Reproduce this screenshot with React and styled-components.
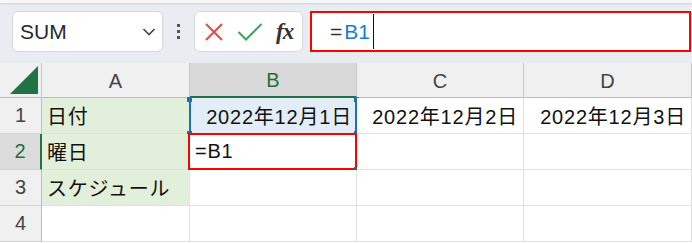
import React from "react";
import styled, { createGlobalStyle, css } from "styled-components";

const GlobalStyle = createGlobalStyle`
  body {
    margin: 0;
    background: #ffffff;
  }
`;

const FONT = `"Liberation Sans", "Noto Sans CJK JP", sans-serif`;

const Frame = styled.div`
  width: 692px;
  height: 243px;
  overflow: hidden;
  font-family: ${FONT};
  background: #ffffff;
`;

// TOOLBAR WITH NAME BOX AND FORMULA BAR
const Toolbar = styled.div`
  position: relative;
  height: 63px;
  box-sizing: border-box;
  background: #e9ecf0;
  padding: 11px 1px 0 12px;
  display: flex;
  align-items: flex-start;
`;

const TopStrip = styled.div`
  position: absolute;
  left: 0;
  right: 0;
  top: 0;
  height: 3px;
  background: #f7f8f9;
  box-shadow: 0 1px 2px rgba(0, 0, 0, 0.12);
`;

const NameBox = styled.div`
  width: 151px;
  height: 41px;
  box-sizing: border-box;
  background: #fff;
  border: 1px solid #d4d7db;
  border-radius: 6px;
  display: flex;
  align-items: center;
  justify-content: space-between;
  padding: 0 6px 0 7px;
  font-size: 21px;
  color: #262a30;
`;

const Dots = styled.div`
  width: 31px;
  height: 41px;
  display: flex;
  flex-direction: column;
  align-items: center;
  justify-content: center;
  gap: 3px;
  span {
    width: 3px;
    height: 3px;
    background: #555;
  }
`;

const FuncBox = styled.div`
  width: 109px;
  height: 41px;
  box-sizing: border-box;
  background: #fff;
  border: 1px solid #d4d7db;
  border-radius: 6px;
  display: flex;
  align-items: center;
  padding: 0 6px 0 9px;
  gap: 13px;
`;

const Fx = styled.span`
  font-family: "Liberation Serif", "DejaVu Serif", serif;
  font-style: italic;
  font-weight: bold;
  font-size: 23px;
  color: #333;
  letter-spacing: -1px;
`;

const FormulaInput = styled.div`
  margin-left: 7px;
  flex: 1;
  height: 41px;
  box-sizing: border-box;
  border: 2px solid #ff0000;
  background: #fff;
  display: flex;
  align-items: center;
  padding-left: 18px;
  font-size: 21px;
  color: #333;
`;

const Ref = styled.span`
  color: #1a7bd6;
  margin-left: 2px;
`;

const Caret = styled.span`
  display: inline-block;
  width: 1px;
  height: 35px;
  background: #111;
  margin-left: 3px;
`;

// SHEET GRID
const Sheet = styled.div`
  display: grid;
  grid-template-columns: 42px 148px 167px 167px 168px;
  grid-template-rows: 35px repeat(4, 36px);
`;

const Corner = styled.div`
  background: #f0f0f0;
  border-right: 1px solid #c9c9c9;
  border-bottom: 1px solid #bdbdbd;
  box-sizing: border-box;
  display: flex;
  align-items: flex-end;
  justify-content: flex-end;
  padding: 0 3px 3px 0;
`;

const ColHead = styled.div`
  box-sizing: border-box;
  background: ${(p) => (p.active ? "#d9d9d9" : "#f0f0f0")};
  border-right: 1px solid #c9c9c9;
  border-bottom: ${(p) => (p.active ? "2px solid #217346" : "1px solid #bdbdbd")};
  display: flex;
  align-items: center;
  justify-content: center;
  font-size: 20px;
  color: ${(p) => (p.active ? "#1f6f43" : "#444")};
  padding-top: 2px;
`;

const RowHead = styled.div`
  box-sizing: border-box;
  background: ${(p) => (p.active ? "#dcdcdc" : "#f0f0f0")};
  border-right: ${(p) => (p.active ? "2px solid #217346" : "1px solid #bdbdbd")};
  border-bottom: 1px solid #d6d6d6;
  display: flex;
  align-items: center;
  justify-content: center;
  font-size: 20px;
  color: ${(p) => (p.active ? "#1f6f43" : "#444")};
`;

const Cell = styled.div`
  position: relative;
  box-sizing: border-box;
  border-right: 1px solid #e1e1e1;
  border-bottom: 1px solid #e1e1e1;
  background: ${(p) => p.bg || "#fff"};
  display: flex;
  align-items: center;
  justify-content: ${(p) => (p.right ? "flex-end" : "flex-start")};
  padding: 0 5px 0 5px;
  font-size: 20px;
  letter-spacing: 0.8px;
  color: #111;
  white-space: nowrap;
  ${(p) =>
    p.refRange &&
    css`
      border-left: 2px solid #1a6fc2;
      border-right: 2px solid #1a6fc2;
      margin-left: -1px;
      padding-right: 3px;
    `}
`;

const Handle = styled.span`
  position: absolute;
  width: 5px;
  height: 5px;
  background: ${(p) => p.color};
  ${(p) => p.pos}
`;

const Selection = styled.div`
  position: absolute;
  left: -2px;
  top: -1px;
  right: -1px;
  bottom: -1px;
  border: 2px solid #ff0000;
  pointer-events: none;
`;

const XIcon = () => (
  <svg width="20" height="20" viewBox="0 0 20 20">
    <path d="M2 2 L18 18 M18 2 L2 18" stroke="#e8474a" strokeWidth="2" fill="none" />
  </svg>
);

const CheckIcon = () => (
  <svg width="26" height="20" viewBox="0 0 26 20">
    <path d="M1.5 10 L9 17.5 L24.5 2" stroke="#3da35a" strokeWidth="2" fill="none" />
  </svg>
);

const Chevron = () => (
  <svg width="14" height="10" viewBox="0 0 14 10">
    <path d="M1.5 2 L7 7.5 L12.5 2" stroke="#444" strokeWidth="1.6" fill="none" />
  </svg>
);

const CornerTriangle = () => (
  <svg width="28" height="28" viewBox="0 0 28 28">
    <polygon points="28,0 28,28 0,28" fill="#217346" />
  </svg>
);

const rows = [
  { n: 1, a: "日付", b: "2022年12月1日", c: "2022年12月2日", d: "2022年12月3日" },
  { n: 2, a: "曜日", b: "=B1", c: "", d: "" },
  { n: 3, a: "スケジュール", b: "", c: "", d: "" },
  { n: 4, a: "", b: "", c: "", d: "" },
];

const App = () => {
  return (
    <Frame>
      <GlobalStyle />
      <Toolbar>
        <TopStrip />
        <NameBox>
          <span>SUM</span>
          <Chevron />
        </NameBox>
        <Dots>
          <span />
          <span />
          <span />
        </Dots>
        <FuncBox>
          <XIcon />
          <CheckIcon />
          <Fx>fx</Fx>
        </FuncBox>
        <FormulaInput>
          <span>=</span>
          <Ref>B1</Ref>
          <Caret />
        </FormulaInput>
      </Toolbar>
      <Sheet>
        <Corner>
          <CornerTriangle />
        </Corner>
        <ColHead>A</ColHead>
        <ColHead active>B</ColHead>
        <ColHead>C</ColHead>
        <ColHead>D</ColHead>
        {rows.map((r) => (
          <React.Fragment key={r.n}>
            <RowHead active={r.n === 2}>{r.n}</RowHead>
            <Cell bg={r.n <= 3 ? "#e2efda" : "#fff"}>{r.a}</Cell>
            {r.n === 1 ? (
              <Cell right refRange bg="#e3edf7">
                {r.b}
                <Handle color="#1a6fc2" pos="left: -4px; top: -1px;" />
                <Handle color="#1a6fc2" pos="right: -4px; top: -1px;" />
                <Handle color="#1a6fc2" pos="left: -4px; bottom: -3px;" />
                <Handle color="#1a6fc2" pos="right: -4px; bottom: -3px;" />
              </Cell>
            ) : r.n === 2 ? (
              <Cell>
                {r.b}
                <Selection />
                <Handle color="#217346" pos="right: -3px; bottom: -3px;" />
              </Cell>
            ) : (
              <Cell>{r.b}</Cell>
            )}
            <Cell right>{r.c}</Cell>
            <Cell right>{r.d}</Cell>
          </React.Fragment>
        ))}
      </Sheet>
    </Frame>
  );
};

export default App;
